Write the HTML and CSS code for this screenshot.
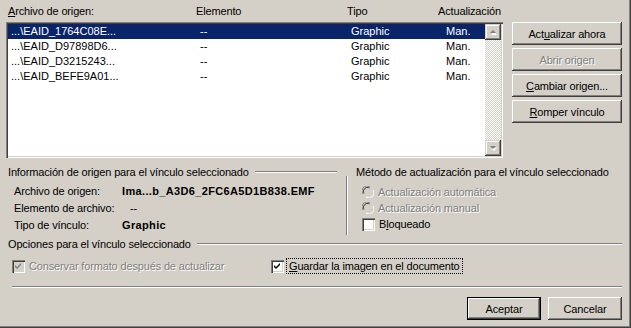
FILE: index.html
```html
<!DOCTYPE html>
<html lang="es">
<head>
    <meta charset="UTF-8">
    <title>Vínculos</title>
    <link rel="stylesheet" href="styles.css">
</head>
<body>
    <div class="dialog">
        <div class="top">
            <div class="links-pane">
                <div class="list-header">
                    <span><u>A</u>rchivo de origen:</span>
                    <span>Elemento</span>
                    <span>Tipo</span>
                    <span>Actualización</span>
                </div>
                <div class="listbox">
                    <div class="rows">
                        <div class="row selected">
                            <span>...\EAID_1764C08E...</span><span>--</span><span>Graphic</span><span>Man.</span>
                        </div>
                        <div class="row">
                            <span>...\EAID_D97898D6...</span><span>--</span><span>Graphic</span><span>Man.</span>
                        </div>
                        <div class="row">
                            <span>...\EAID_D3215243...</span><span>--</span><span>Graphic</span><span>Man.</span>
                        </div>
                        <div class="row">
                            <span>...\EAID_BEFE9A01...</span><span>--</span><span>Graphic</span><span>Man.</span>
                        </div>
                    </div>
                    <div class="scrollbar">
                        <div class="scroll-btn">
                            <svg width="12" height="12" viewBox="0 0 12 12"><polygon points="3,8 6,5 9,8" fill="#fff" transform="translate(1,1)"/><polygon points="3,7 6,4 9,7" fill="#808080"/></svg>
                        </div>
                        <div class="track"></div>
                        <div class="scroll-btn">
                            <svg width="12" height="12" viewBox="0 0 12 12"><polygon points="3,5 6,8 9,5" fill="#fff" transform="translate(1,1)"/><polygon points="3,4 6,7 9,4" fill="#808080"/></svg>
                        </div>
                    </div>
                </div>
            </div>
            <div class="side-buttons">
                <button class="btn">Act<u>u</u>alizar ahora</button>
                <button class="btn disabled">Abrir origen</button>
                <button class="btn"><u>C</u>ambiar origen...</button>
                <button class="btn"><u>R</u>omper vínculo</button>
            </div>
        </div>

        <div class="info-row">
            <div class="group source-info">
                <div class="group-title"><span>Información de origen para el vínculo seleccionado</span><i class="hline"></i></div>
                <div class="info-grid">
                    <span>Archivo de origen:</span><b>Ima...b_A3D6_2FC6A5D1B838.EMF</b>
                    <span>Elemento de archivo:</span><span class="dash">--</span>
                    <span>Tipo de vínculo:</span><b>Graphic</b>
                </div>
            </div>
            <div class="group update-method">
                <i class="vline"></i>
                <div class="method-body">
                    <div class="group-title"><span>Método de actualización para el vínculo seleccionado</span></div>
                    <div class="choices">
                        <label class="choice disabled">
                            <svg class="radio" width="12" height="12" viewBox="0 0 12 12">
                                <path d="M1,8 A5,5 0 0 1 8,1" fill="none" stroke="#808080" stroke-width="1"/>
                                <path d="M2,7.5 A4,4 0 0 1 7.5,2" fill="none" stroke="#404040" stroke-width="1"/>
                                <path d="M4,11 A5,5 0 0 0 11,4" fill="none" stroke="#fff" stroke-width="1"/>
                                <circle cx="6" cy="6" r="3.5" fill="#d4d0c8"/>
                            </svg>
                            <span>Actualización automática</span>
                        </label>
                        <label class="choice disabled">
                            <svg class="radio" width="12" height="12" viewBox="0 0 12 12">
                                <path d="M1,8 A5,5 0 0 1 8,1" fill="none" stroke="#808080" stroke-width="1"/>
                                <path d="M2,7.5 A4,4 0 0 1 7.5,2" fill="none" stroke="#404040" stroke-width="1"/>
                                <path d="M4,11 A5,5 0 0 0 11,4" fill="none" stroke="#fff" stroke-width="1"/>
                                <circle cx="6" cy="6" r="3.5" fill="#d4d0c8"/>
                            </svg>
                            <span>Actualización manual</span>
                        </label>
                        <label class="choice">
                            <span class="checkbox"></span>
                            <span>B<u>l</u>oqueado</span>
                        </label>
                    </div>
                </div>
            </div>
        </div>

        <div class="group options">
            <div class="group-title"><span>Opciones para el vínculo seleccionado</span><i class="hline"></i></div>
            <div class="option-row">
                <label class="choice disabled keep-format">
                    <span class="checkbox off">
                        <svg width="7" height="7" viewBox="0 0 7 7"><path d="M0,2 L2,4 L6,0 L6,2 L2,6 L0,4 Z" fill="#808080"/></svg>
                    </span>
                    <span>Conservar formato después de actualizar</span>
                </label>
                <label class="choice">
                    <span class="checkbox">
                        <svg width="7" height="7" viewBox="0 0 7 7"><path d="M0,2 L2,4 L6,0 L6,2 L2,6 L0,4 Z" fill="#000"/></svg>
                    </span>
                    <span class="focused"><u>G</u>uardar la imagen en el documento</span>
                </label>
            </div>
        </div>

        <div class="separator"></div>

        <div class="footer">
            <button class="btn default">Aceptar</button>
            <button class="btn">Cancelar</button>
        </div>
    </div>
</body>
</html>
```

FILE: styles.css
```css
* {
    margin: 0;
    padding: 0;
    box-sizing: border-box;
}

:root {
    --face: #d4d0c8;
    --shadow: #808080;
    --dark: #404040;
    --light: #ffffff;
    --select: #0a246a;
}

body {
    font-family: "Liberation Sans", Arial, sans-serif;
    font-size: 11px;
    letter-spacing: -0.15px;
    color: #000;
    background: var(--face);
}

u {
    text-decoration: underline;
    text-underline-offset: 1px;
}

.dialog {
    width: 631px;
    height: 328px;
    padding: 4px 9px 0 6px;
    background: var(--face);
    box-shadow: inset -1px -1px var(--dark), inset -2px -2px var(--shadow);
}

/* links list + side buttons */
.top {
    display: flex;
    gap: 9px;
}

.links-pane {
    width: 497px;
}

.list-header {
    height: 18px;
    line-height: 14px;
    display: grid;
    grid-template-columns: 188px 151px 91px 1fr;
    padding-left: 2px;
}

.listbox {
    height: 136px;
    display: flex;
    background: #fff;
    box-shadow: inset 1px 1px var(--shadow), inset 2px 2px var(--dark),
                inset -1px -1px var(--light), inset -2px -2px var(--face);
    padding: 2px;
}

.rows {
    flex: 1;
}

.row {
    height: 15px;
    line-height: 15px;
    display: grid;
    grid-template-columns: 189px 151px 95px 1fr;
    padding-left: 3px;
    letter-spacing: 0;
    white-space: nowrap;
}

.row.selected {
    background: var(--select);
    color: #fff;
}

.scrollbar {
    width: 16px;
    display: flex;
    flex-direction: column;
}

.scroll-btn {
    width: 16px;
    height: 16px;
    display: flex;
    align-items: center;
    justify-content: center;
    background: var(--face);
    box-shadow: inset -1px -1px var(--dark), inset 1px 1px var(--face),
                inset -2px -2px var(--shadow), inset 2px 2px var(--light);
}

.track {
    flex: 1;
    background-image: repeating-conic-gradient(#fff 0 25%, var(--face) 0 50%);
    background-size: 2px 2px;
}

.side-buttons {
    width: 110px;
    padding-top: 18px;
    display: flex;
    flex-direction: column;
    gap: 3px;
}

.btn {
    height: 23px;
    font-family: inherit;
    font-size: 11px;
    letter-spacing: -0.15px;
    color: #000;
    border: none;
    background: var(--face);
    box-shadow: inset -1px -1px var(--dark), inset 1px 1px var(--light),
                inset -2px -2px var(--shadow), inset 2px 2px var(--face);
}

.btn.disabled {
    color: var(--shadow);
    text-shadow: 1px 1px 0 var(--light);
}

.btn.default {
    box-shadow: inset -1px -1px #000, inset 1px 1px #000,
                inset -2px -2px var(--dark), inset 2px 2px var(--light),
                inset -3px -3px var(--shadow);
}

/* group boxes */
.group-title {
    height: 14px;
    line-height: 14px;
    display: flex;
    align-items: center;
    white-space: nowrap;
}

.group-title span {
    padding-left: 2px;
}

.hline {
    flex: 1;
    height: 2px;
    margin-left: 6px;
    border-top: 1px solid var(--shadow);
    border-bottom: 1px solid var(--light);
}

.info-row {
    height: 72px;
    margin-top: 7px;
    display: flex;
    gap: 9px;
}

.source-info {
    width: 331px;
}

.info-grid {
    margin-top: 3px;
    padding-left: 8px;
    display: grid;
    grid-template-columns: 108px 1fr;
    grid-auto-rows: 17px;
    align-items: center;
}

.info-grid b {
    letter-spacing: 0.35px;
}

.info-grid .dash {
    padding-left: 8px;
}

.update-method {
    display: flex;
    flex: 1;
}

.vline {
    width: 2px;
    height: 59px;
    margin-top: 11px;
    border-left: 1px solid var(--shadow);
    border-right: 1px solid var(--light);
}

.method-body {
    padding-left: 6px;
}

.choices {
    margin-top: 5px;
    padding-left: 8px;
}

.choice {
    height: 16px;
    display: flex;
    align-items: center;
    gap: 4px;
    white-space: nowrap;
}

.choice.disabled {
    color: var(--shadow);
    text-shadow: 1px 1px 0 var(--light);
}

.radio {
    flex: none;
}

.checkbox {
    flex: none;
    width: 13px;
    height: 13px;
    display: flex;
    align-items: center;
    justify-content: center;
    background: #fff;
    box-shadow: inset 1px 1px var(--shadow), inset 2px 2px var(--dark),
                inset -1px -1px var(--light), inset -2px -2px var(--face);
}

.checkbox.off {
    background: var(--face);
}

.option-row {
    margin-top: 7px;
    padding-left: 6px;
    display: flex;
}

.keep-format {
    width: 259px;
}

.focused {
    outline: 1px dotted #000;
    outline-offset: 1px;
    padding: 0 1px;
}

.separator {
    height: 2px;
    margin: 12px 0 0 6px;
    border-top: 1px solid var(--shadow);
    border-bottom: 1px solid var(--light);
}

.footer {
    margin-top: 9px;
    display: flex;
    justify-content: flex-end;
    gap: 7px;
}

.footer .btn {
    width: 74px;
}
```
